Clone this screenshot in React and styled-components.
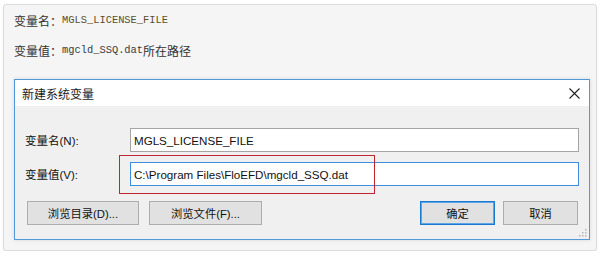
import React from 'react'
import styled, { createGlobalStyle } from 'styled-components'

const Global = createGlobalStyle`
  body {
    margin: 0;
    background: #ffffff;
    font-family: "Liberation Sans", "Noto Sans CJK SC", sans-serif;
  }
`

const Panel = styled.div`
  box-sizing: border-box;
  margin: 4px 3px 0 3px;
  width: 594px;
  height: 247px;
  background: #f5f5f5;
  border: 1px solid #dcdcdc;
  border-radius: 3px;
  box-shadow: 0 1px 2px rgba(0, 0, 0, 0.08);
  padding: 6px 7px 0 10px;
  display: flex;
  flex-direction: column;
`

const InfoLine = styled.div`
  display: flex;
  align-items: center;
  height: 18px;
  margin-top: ${p => p.$gap}px;
  font-size: 12px;
  color: #333;
  font-family: "Noto Sans CJK SC", sans-serif;
`

const Code = styled.span`
  font-family: "Liberation Mono", "Noto Sans CJK SC", monospace;
  font-size: 10.4px;
  color: ${p => p.$tone || '#3a3a3a'};
`

const Dialog = styled.div`
  margin-top: 20px;
  width: 576px;
  box-sizing: border-box;
  border: 1px solid #4f9ad9;
  background: #f0f0f0;
  box-shadow: 0 0 4px rgba(0, 0, 0, 0.12);
  display: flex;
  flex-direction: column;
`

const TitleBar = styled.div`
  height: 26px;
  background: #ffffff;
  display: flex;
  align-items: center;
  justify-content: space-between;
  padding: 0 9px 0 7px;
  font-family: "Noto Sans CJK SC", sans-serif;
  font-size: 12px;
  color: #1a1a1a;
`

const Body = styled.div`
  position: relative;
  height: 133px;
  box-sizing: border-box;
  padding: 22px 10px 0 10px;
  display: flex;
  flex-direction: column;
`

const Row = styled.div`
  display: flex;
  align-items: center;
  height: 24px;
  margin-top: ${p => p.$gap || 0}px;
`

const Label = styled.div`
  width: 105px;
  font-size: 11.5px;
  color: #111;
`

const Input = styled.div`
  flex: 1;
  height: 24px;
  box-sizing: border-box;
  background: #fff;
  border: 1px solid ${p => (p.$focus ? '#3d8ee0' : '#a5a5a5')};
  display: flex;
  align-items: center;
  padding-left: 3px;
  font-size: 11.6px;
  color: #111;
`

const Buttons = styled.div`
  display: flex;
  align-items: center;
  margin-top: 15px;
  padding: 0 1px 0 2px;
`

const Group = styled.div`
  display: flex;
  gap: ${p => p.$gap}px;
  margin-left: ${p => (p.$right ? 'auto' : '0')};
`

const Button = styled.div`
  width: ${p => p.$w}px;
  height: 24px;
  box-sizing: border-box;
  background: #e1e1e1;
  border: 1px solid ${p => (p.$primary ? '#1a78d0' : '#adadad')};
  box-shadow: ${p => (p.$primary ? 'inset 0 0 0 1px #5ea5e6' : 'none')};
  display: flex;
  align-items: center;
  justify-content: center;
  font-size: 11.3px;
  color: #111;
`

const Mark = styled.div`
  position: absolute;
  left: 104px;
  top: 49px;
  width: 256px;
  height: 39px;
  box-sizing: border-box;
  border: 1px solid #c0262d;
  pointer-events: none;
`

const Grip = styled.svg`
  position: absolute;
  right: 2px;
  bottom: 2px;
`

const CloseIcon = () => (
  <svg width="11" height="11" viewBox="0 0 11 11">
    <path d="M0.5 0.5 L10.5 10.5 M10.5 0.5 L0.5 10.5" stroke="#222" strokeWidth="1.1" fill="none" />
  </svg>
)

export default function App() {
  return (
    <>
      <Global />
      <Panel>
        <InfoLine $gap={0}>
          变量名：<Code $tone="#5a4e2c">MGLS_LICENSE_FILE</Code>
        </InfoLine>
        <InfoLine $gap={12}>
          变量值：<Code>mgcld_SSQ.dat</Code>所在路径
        </InfoLine>
        <Dialog>
          <TitleBar>
            <span>新建系统变量</span>
            <CloseIcon />
          </TitleBar>
          <Body>
            <Row>
              <Label>变量名(N):</Label>
              <Input>MGLS_LICENSE_FILE</Input>
            </Row>
            <Row $gap={10}>
              <Label>变量值(V):</Label>
              <Input $focus>C:\Program Files\FloEFD\mgcld_SSQ.dat</Input>
            </Row>
            <Buttons>
              <Group $gap={10}>
                <Button $w={112}>浏览目录(D)...</Button>
                <Button $w={113}>浏览文件(F)...</Button>
              </Group>
              <Group $gap={8} $right>
                <Button $w={75} $primary>确定</Button>
                <Button $w={75}>取消</Button>
              </Group>
            </Buttons>
            <Mark />
            <Grip width="8" height="8" viewBox="0 0 8 8">
              <rect x="6" y="0" width="1.5" height="1.5" fill="#b5b5b5" />
              <rect x="3" y="3" width="1.5" height="1.5" fill="#b5b5b5" />
              <rect x="6" y="3" width="1.5" height="1.5" fill="#b5b5b5" />
              <rect x="0" y="6" width="1.5" height="1.5" fill="#b5b5b5" />
              <rect x="3" y="6" width="1.5" height="1.5" fill="#b5b5b5" />
              <rect x="6" y="6" width="1.5" height="1.5" fill="#b5b5b5" />
            </Grip>
          </Body>
        </Dialog>
      </Panel>
    </>
  )
}
